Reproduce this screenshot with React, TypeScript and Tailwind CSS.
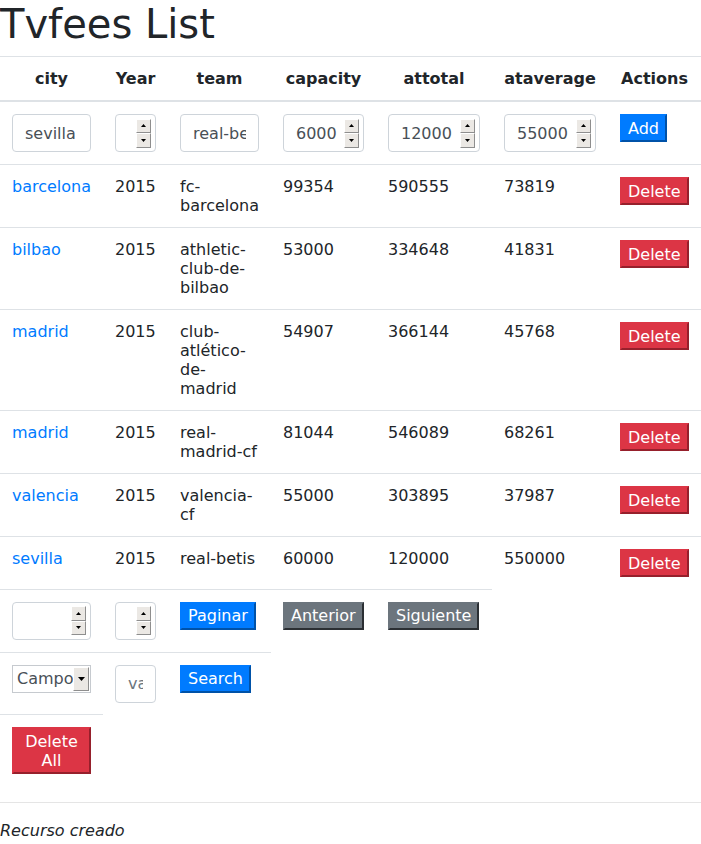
import React from "react";

type Tone = "primary" | "danger" | "secondary";

const rows = [
  { city: "barcelona", year: 2015, team: "fc-barcelona", capacity: 99354, attotal: 590555, ataverage: 73819 },
  { city: "bilbao", year: 2015, team: "athletic-club-de-bilbao", capacity: 53000, attotal: 334648, ataverage: 41831 },
  { city: "madrid", year: 2015, team: "club-atlético-de-madrid", capacity: 54907, attotal: 366144, ataverage: 45768 },
  { city: "madrid", year: 2015, team: "real-madrid-cf", capacity: 81044, attotal: 546089, ataverage: 68261 },
  { city: "valencia", year: 2015, team: "valencia-cf", capacity: 55000, attotal: 303895, ataverage: 37987 },
  { city: "sevilla", year: 2015, team: "real-betis", capacity: 60000, attotal: 120000, ataverage: 550000 },
];

const tones: Record<Tone, string> = {
  primary: "bg-[#007bff] border-[#007bff] border-r-[#0052a8] border-b-[#0052a8]",
  danger: "bg-[#dc3545] border-[#dc3545] border-r-[#96202c] border-b-[#96202c]",
  secondary: "bg-[#6c757d] border-[#6c757d] border-r-[#2b2f33] border-b-[#2b2f33]",
};

const Btn = ({ tone, children, className = "w-fit" }: { tone: Tone; children: React.ReactNode; className?: string }) => (
  <button className={`block border-2 px-[6px] py-[2.5px] leading-[19px] text-white ${tones[tone]} ${className}`}>
    {children}
  </button>
);

const Arrow = ({ down, w = 5, h = 3 }: { down?: boolean; w?: number; h?: number }) => (
  <svg width={w} height={h} viewBox={`0 0 ${w} ${h}`} className="block">
    <path d={down ? `M0 0H${w}L${w / 2} ${h}Z` : `M0 ${h}H${w}L${w / 2} 0Z`} fill="#000" />
  </svg>
);

const SpinBox = ({ down }: { down?: boolean }) => (
  <div className="flex-1 flex items-center justify-center bg-[#ebe8e4] border border-t-white border-l-white border-r-[#8e8e8e] border-b-[#8e8e8e]">
    <Arrow down={down} />
  </div>
);

const NumberField = ({ value }: { value?: string }) => (
  <div className="flex items-center h-[38px] w-full bg-white border border-[#ced4da] rounded pl-3 pr-1 text-[#495057]">
    <span className="flex-1 overflow-hidden whitespace-nowrap">{value}</span>
    <div className="flex flex-col w-[15px] h-[29px] shrink-0">
      <SpinBox />
      <SpinBox down />
    </div>
  </div>
);

const TextField = ({ value, placeholder }: { value?: string; placeholder?: string }) => (
  <input
    readOnly
    value={value ?? ""}
    placeholder={placeholder}
    className="block h-[38px] w-full bg-white border border-[#ced4da] rounded px-3 text-[#495057] placeholder:text-[#6c757d] outline-none"
  />
);

const SelectField = () => (
  <div className="flex h-[28px] w-full border border-[#c6cacf] bg-white text-[#495057]">
    <span className="flex-1 overflow-hidden whitespace-nowrap pl-1 leading-[26px]">Campo</span>
    <div className="w-[16px] my-px mr-px flex items-center justify-center bg-[#ebe8e4] border border-t-white border-l-white border-r-[#8e8e8e] border-b-[#8e8e8e]">
      <Arrow down w={7} h={4} />
    </div>
  </div>
);

const td = "p-3 align-top border-t border-[#dee2e6]";
const th = "p-3 text-center font-bold border-t border-b-2 border-[#dee2e6]";

export default function App() {
  return (
    <div className="font-['DejaVu_Sans',sans-serif] text-base leading-[19px] text-[#212529] bg-white">
      <h1 className="text-[40px] leading-[48px] font-medium mb-2">Tvfees List</h1>
      <table className="w-full table-fixed border-collapse">
        <colgroup>
          <col className="w-[103px]" />
          <col className="w-[65px]" />
          <col className="w-[103px]" />
          <col className="w-[105px]" />
          <col className="w-[116px]" />
          <col className="w-[116px]" />
          <col className="w-[93px]" />
        </colgroup>
        <thead>
          <tr>
            <th className={th}>city</th>
            <th className={th}>Year</th>
            <th className={th}>team</th>
            <th className={th}>capacity</th>
            <th className={th}>attotal</th>
            <th className={th}>ataverage</th>
            <th className={th}>Actions</th>
          </tr>
        </thead>
        <tbody>
          <tr>
            <td className={td}><TextField value="sevilla" /></td>
            <td className={td}><NumberField /></td>
            <td className={td}><TextField value="real-betis" /></td>
            <td className={td}><NumberField value="6000" /></td>
            <td className={td}><NumberField value="12000" /></td>
            <td className={td}><NumberField value="55000" /></td>
            <td className={td}><Btn tone="primary">Add</Btn></td>
          </tr>
          {rows.map((r, i) => (
            <tr key={i}>
              <td className={td}>
                <a href="#" className="text-[#007bff]">{r.city}</a>
              </td>
              <td className={td}>{r.year}</td>
              <td className={td}>{r.team}</td>
              <td className={td}>{r.capacity}</td>
              <td className={td}>{r.attotal}</td>
              <td className={td}>{r.ataverage}</td>
              <td className={td}><Btn tone="danger">Delete</Btn></td>
            </tr>
          ))}
          <tr>
            <td className={td}><NumberField /></td>
            <td className={td}><NumberField /></td>
            <td className={td}><Btn tone="primary">Paginar</Btn></td>
            <td className={td}><Btn tone="secondary">Anterior</Btn></td>
            <td className={td}><Btn tone="secondary">Siguiente</Btn></td>
          </tr>
          <tr>
            <td className={td}><SelectField /></td>
            <td className={td}><TextField placeholder="value" /></td>
            <td className={td}><Btn tone="primary">Search</Btn></td>
          </tr>
          <tr>
            <td className={td}><Btn tone="danger" className="w-full">Delete All</Btn></td>
          </tr>
        </tbody>
      </table>
      <hr className="my-4 border-t border-black/10" />
      <p className="italic leading-6">Recurso creado</p>
    </div>
  );
}
